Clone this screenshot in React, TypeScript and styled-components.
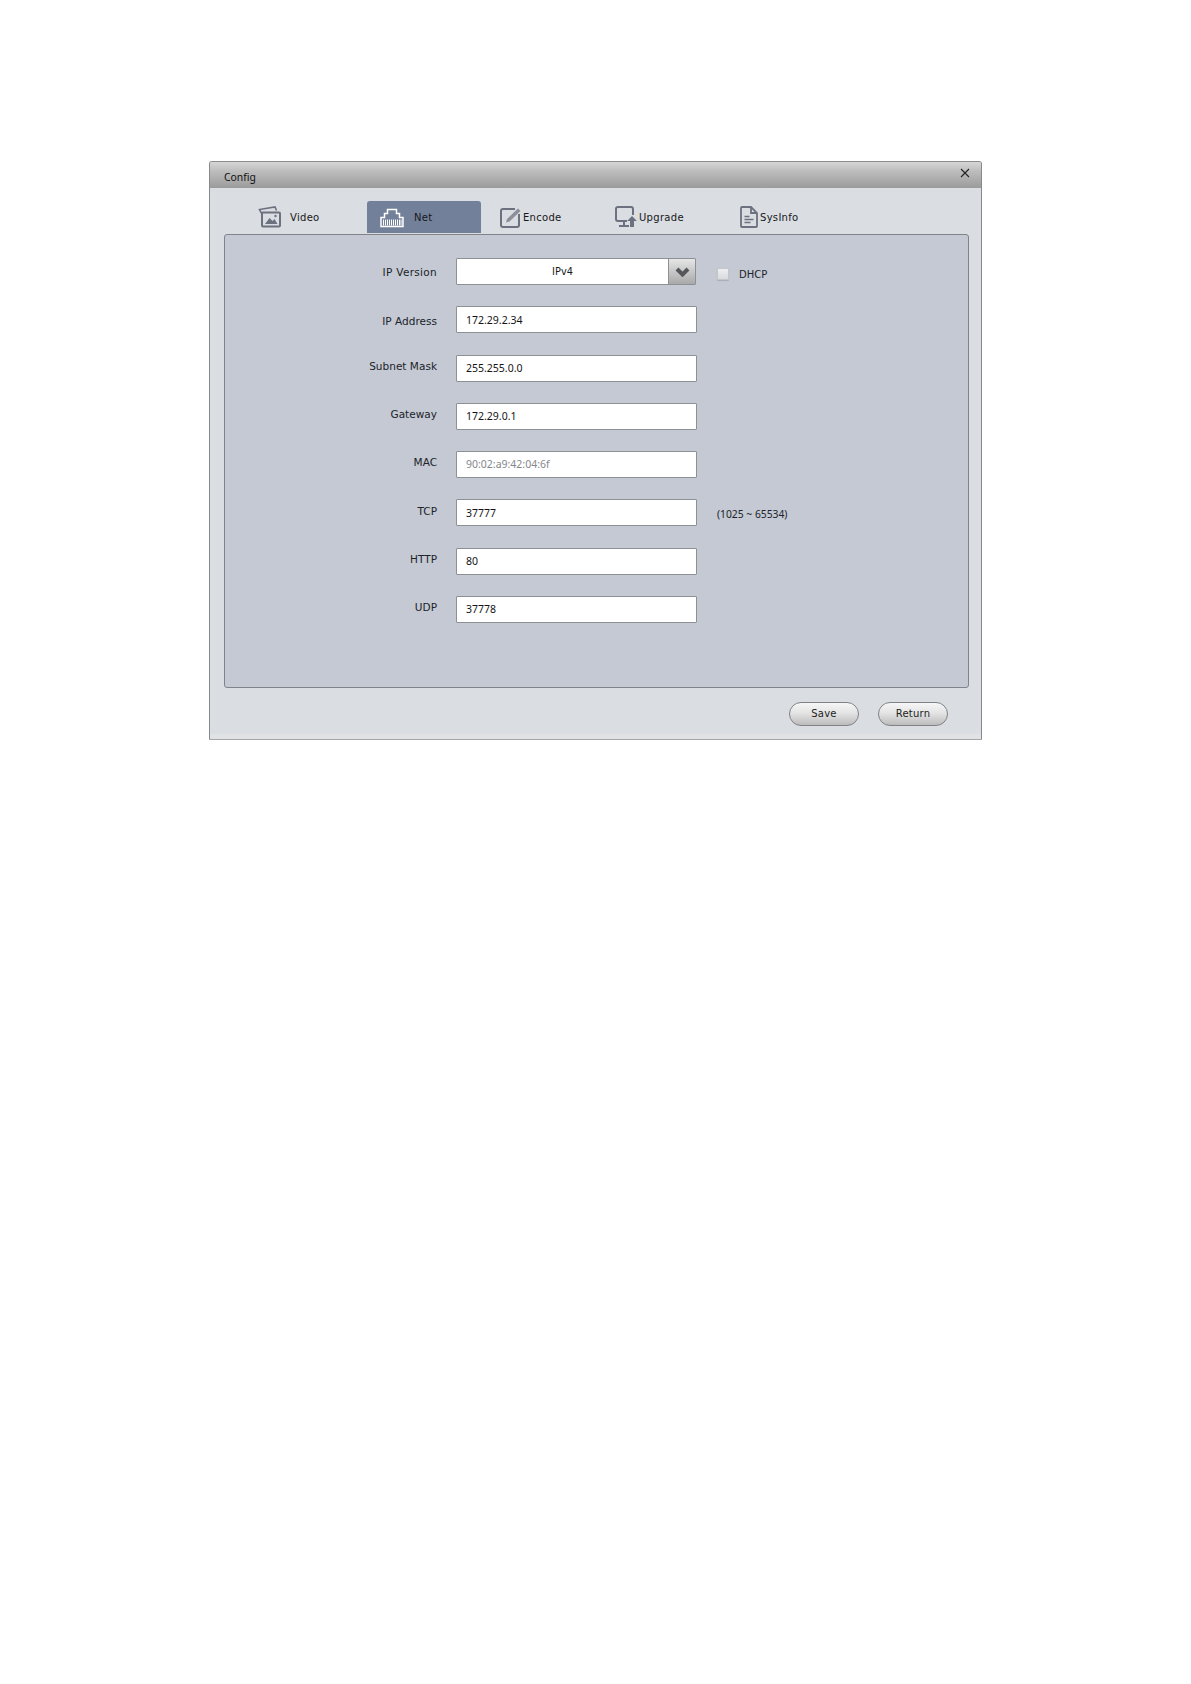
import styled, { createGlobalStyle } from 'styled-components'

const uiFont = '"DejaVu Sans", "Liberation Sans", sans-serif'
const valueFont = '"Noto Sans", "Liberation Sans", sans-serif'
const iconColor = '#6b717f'

const GlobalStyle = createGlobalStyle`
  html, body {
    margin: 0;
    background: #fff;
  }
`

const Page = styled.div`
  height: 1684px;
  padding: 161px 0 0 209px;
  box-sizing: border-box;
`

const Dialog = styled.div`
  width: 773px;
  height: 579px;
  box-sizing: border-box;
  display: flex;
  flex-direction: column;
  background: #dadde1;
  border: 1px solid #85888c;
  border-top-color: #8c8c8c;
  border-bottom: 1px solid #a4a6a9;
  border-radius: 3px 3px 1px 1px;
  box-shadow: inset 0 -5px 0 #e1e2e4;
`

const TitleBar = styled.div`
  height: 26px;
  flex: none;
  display: flex;
  align-items: center;
  justify-content: space-between;
  padding: 2px 11px 0 14px;
  box-sizing: border-box;
  background: linear-gradient(#d6d6d6 0%, #bdbdbd 35%, #9b9b9b 100%);
  border-radius: 2px 2px 0 0;
`

const Title = styled.span`
  font: 10.4px ${valueFont};
  color: #111;
  margin-top: 2px;
`

const CloseIcon = styled.svg`
  width: 10px;
  height: 10px;
  margin-top: -6px;
`

const TabRow = styled.div`
  flex: none;
  height: 32px;
  margin: 13px 0 0 37px;
  display: flex;
  gap: 6px;
`

const Tab = styled.div<{ $active?: boolean; $pad: number; $gap: number }>`
  width: 114px;
  height: 32px;
  box-sizing: border-box;
  display: flex;
  align-items: center;
  padding-left: ${(p) => p.$pad}px;
  gap: ${(p) => p.$gap}px;
  border-radius: 3px 3px 0 0;
  background: ${(p) => (p.$active ? '#73809a' : 'transparent')};
  font: 10px ${uiFont};
  letter-spacing: 0.3px;
  color: #16181c;
`

const TabIcon = styled.svg`
  flex: none;
`

const Panel = styled.div`
  flex: none;
  height: 454px;
  margin: 1px 12px 0 14px;
  box-sizing: border-box;
  padding-top: 23px;
  background: #c4c9d3;
  border: 1px solid #7f848a;
  border-radius: 3px;
`

const Form = styled.div`
  display: grid;
  grid-auto-rows: 48.25px;
`

const Row = styled.div`
  display: grid;
  grid-template-columns: 212px 241px auto;
  column-gap: 19px;
  align-items: start;
`

const Label = styled.div<{ $lift: number; $wide?: boolean }>`
  height: 27px;
  text-align: right;
  font: 10.5px/27px ${uiFont};
  letter-spacing: ${(p) => (p.$wide ? '0.3px' : '0.02px')};
  color: #20232a;
  transform: translateY(${(p) => -p.$lift}px);
`

const Field = styled.div<{ $muted?: boolean; $low?: boolean }>`
  height: 27px;
  box-sizing: border-box;
  padding: 0 9px;
  background: #fff;
  border: 1px solid #8d9095;
  border-radius: 1px;
  font: 10.5px/${(p) => (p.$low ? 26 : 25)}px ${valueFont};
  color: ${(p) => (p.$muted ? '#84878c' : '#141414')};
`

const Select = styled.div`
  height: 27px;
  width: 240px;
  box-sizing: border-box;
  display: flex;
  background: #fff;
  border: 1px solid #8d9095;
  border-radius: 1px;
`

const SelectValue = styled.div`
  flex: 1;
  text-align: center;
  font: 9.8px/26px ${uiFont};
  color: #1a1a1a;
`

const SelectArrow = styled.div`
  width: 26px;
  flex: none;
  display: flex;
  align-items: center;
  justify-content: center;
  background: linear-gradient(#e6e6e6, #a9a9a9);
  border-left: 1px solid #8d9095;
`

const Aside = styled.div`
  display: flex;
  align-items: center;
  height: 27px;
  gap: 10px;
  padding: 5px 0 0 1px;
  box-sizing: border-box;
  font: 10px ${uiFont};
  color: #20232a;
`

const Checkbox = styled.span`
  width: 10px;
  height: 10px;
  background: linear-gradient(#eceef0, #d8dadd);
  border: 1px solid #c3c6cb;
  border-radius: 1px;
  box-shadow: 0 1px 1px #a9adb5;
`

const Hint = styled.div`
  height: 27px;
  padding-left: 1px;
  font: 10.3px/30px ${valueFont};
  color: #20232a;
`

const Footer = styled.div`
  flex: 1;
  display: flex;
  justify-content: flex-end;
  align-items: flex-start;
  gap: 19px;
  padding: 14px 33px 0 0;
`

const Button = styled.div`
  width: 70px;
  height: 24px;
  box-sizing: border-box;
  border: 1px solid #7f8286;
  border-radius: 12px;
  background: linear-gradient(#f6f6f6 0%, #e4e4e4 45%, #bcbcbc 100%);
  text-align: center;
  font: 10px/21px ${uiFont};
  letter-spacing: 0.2px;
  color: #1c1c1c;
`

const rows = [
  { label: 'IP Address', value: '172.29.2.34', lift: -1.5, low: true },
  { label: 'Subnet Mask', value: '255.255.0.0', lift: 2.5 },
  { label: 'Gateway', value: '172.29.0.1', lift: 2.5 },
  { label: 'MAC', value: '90:02:a9:42:04:6f', lift: 2.5, muted: true },
  { label: 'TCP', value: '37777', lift: 1.5, low: true, hint: '(1025 ~ 65534)' },
  { label: 'HTTP', value: '80', lift: 2.5 },
  { label: 'UDP', value: '37778', lift: 2.5 },
]

const VideoIcon = () => (
  <TabIcon width="24" height="22" viewBox="0 0 24 22" fill="none" stroke={iconColor} strokeWidth="2">
    <path d="M4 8 1.5 3.5 17 1l1.5 3.5" strokeWidth="1.6" />
    <rect x="4" y="6.5" width="18" height="14" rx="1" />
    <path d="M7 18l4.5-6 3 3 2-2 3 5z" fill={iconColor} stroke="none" />
    <circle cx="17.5" cy="10" r="1.2" fill={iconColor} stroke="none" />
  </TabIcon>
)

const NetIcon = () => (
  <TabIcon width="24" height="22" viewBox="0 0 24 22" fill="none" stroke="#fff" strokeWidth="1.5">
    <path d="M1 20.5V11.5h3.5V7.5h3V3.5h9v4h3v4H23v9z" />
    <path d="M3.5 13.5v6M5.5 13.5v6M7.5 13.5v6M9.5 13.5v6M11.5 13.5v6M13.5 13.5v6M15.5 13.5v6M17.5 13.5v6M19.5 13.5v6M21 13.5v6" strokeWidth="1" />
  </TabIcon>
)

const EncodeIcon = () => (
  <TabIcon width="22" height="22" viewBox="0 0 22 22" fill="none" stroke={iconColor} strokeWidth="2">
    <path d="M15 3H3a2 2 0 0 0-2 2v14a2 2 0 0 0 2 2h14a2 2 0 0 0 2-2V8" />
    <path d="M6 16.5 7 13 18 2.5 20.5 5 9.5 15.5z" fill="#8b909b" stroke="none" />
  </TabIcon>
)

const UpgradeIcon = () => (
  <TabIcon width="22" height="22" viewBox="0 0 22 22" fill="none" stroke={iconColor} strokeWidth="2">
    <path d="M12 15H3a2 2 0 0 1-2-2V3a2 2 0 0 1 2-2h13a2 2 0 0 1 2 2v6" />
    <path d="M9 15v5M4 20h10" />
    <path d="M17 10l5 5h-3v6h-4v-6h-3z" fill={iconColor} stroke="none" />
  </TabIcon>
)

const SysInfoIcon = () => (
  <TabIcon width="18" height="22" viewBox="0 0 18 22" fill="none" stroke={iconColor} strokeWidth="1.8">
    <path d="M2 1h9l6 6v13a1 1 0 0 1-1 1H2a1 1 0 0 1-1-1V2a1 1 0 0 1 1-1z" />
    <path d="M11 1v6h6" />
    <path d="M4.5 10.5h5M4.5 13.5h9M4.5 16.5h6" strokeWidth="1.5" />
  </TabIcon>
)

export default function App() {
  return (
    <Page>
      <GlobalStyle />
      <Dialog>
        <TitleBar>
          <Title>Config</Title>
          <CloseIcon viewBox="0 0 10 10" stroke="#222" strokeWidth="1.1">
            <path d="M1 1l8 8M9 1l-8 8" />
          </CloseIcon>
        </TitleBar>
        <TabRow>
          <Tab $pad={11} $gap={8}>
            <VideoIcon />
            Video
          </Tab>
          <Tab $active $pad={13} $gap={10}>
            <NetIcon />
            Net
          </Tab>
          <Tab $pad={13} $gap={1}>
            <EncodeIcon />
            Encode
          </Tab>
          <Tab $pad={8} $gap={2}>
            <UpgradeIcon />
            Upgrade
          </Tab>
          <Tab $pad={13} $gap={2}>
            <SysInfoIcon />
            SysInfo
          </Tab>
        </TabRow>
        <Panel>
          <Form>
            <Row>
              <Label $wide $lift={-1}>IP Version</Label>
              <Select>
                <SelectValue>IPv4</SelectValue>
                <SelectArrow>
                  <svg width="15" height="10" viewBox="0 0 15 10" fill="none" stroke="#55575a" strokeWidth="4">
                    <path d="M2 2 7.5 7.5 13 2" />
                  </svg>
                </SelectArrow>
              </Select>
              <Aside>
                <Checkbox />
                DHCP
              </Aside>
            </Row>
            {rows.map((row) => (
              <Row key={row.label}>
                <Label $lift={row.lift}>{row.label}</Label>
                <Field $muted={row.muted} $low={row.low}>{row.value}</Field>
                {row.hint ? <Hint>{row.hint}</Hint> : null}
              </Row>
            ))}
          </Form>
        </Panel>
        <Footer>
          <Button>Save</Button>
          <Button>Return</Button>
        </Footer>
      </Dialog>
    </Page>
  )
}
